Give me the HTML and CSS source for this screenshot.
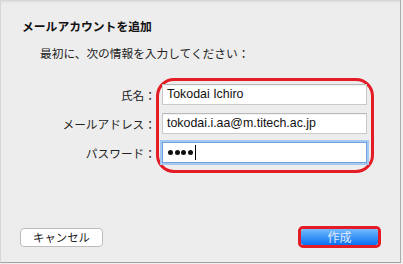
FILE: index.html
```html
<!DOCTYPE html>
<html lang="ja">
<head>
<meta charset="utf-8">
<link rel="stylesheet" href="styles.css">
</head>
<body>
<div class="window">
  <div class="title">メールアカウントを追加</div>
  <div class="intro">最初に、次の情報を入力してください：</div>
  <div class="form">
    <div class="labels">
      <div class="label">氏名：</div>
      <div class="label">メールアドレス：</div>
      <div class="label">パスワード：</div>
    </div>
    <div class="fields">
      <div class="field">Tokodai Ichiro</div>
      <div class="field">tokodai.i.aa@m.titech.ac.jp</div>
      <div class="field focused"><span class="dot"></span><span class="dot"></span><span class="dot"></span><span class="dot"></span><span class="caret"></span></div>
    </div>
  </div>
  <div class="footer">
    <div class="btn cancel">キャンセル</div>
    <div class="primary-ring"><div class="btn primary">作成</div></div>
  </div>
</div>
</body>
</html>
```
FILE: styles.css
```css
html, body {
  margin: 0;
  padding: 0;
  background: #f0f0f0;
  width: 403px;
  height: 264px;
  overflow: hidden;
}
.window {
  width: 399px;
  height: 262px;
  box-sizing: content-box;
  border-left: 1px solid #d6d6d6;
  border-right: 1px solid #a9a9a9;
  border-bottom: 1px solid #a3a3a3;
  background: linear-gradient(#d3d3d3 0px, #e6e6e6 2px, #ededed 4px, #ededed 100%);
  font-family: "Noto Sans CJK JP", "Liberation Sans", sans-serif;
  color: #1a1a1a;
  display: flex;
  flex-direction: column;
}
.title {
  margin: 18px 0 0 21px;
  font-size: 11.8px;
  line-height: 16px;
  font-weight: bold;
  color: #111;
}
.intro {
  margin: 10px 0 0 39px;
  font-size: 11.7px;
  line-height: 17px;
  color: #222;
}
.form {
  display: flex;
  margin-top: 17px;
}
.labels {
  width: 155px;
  padding-top: 6px;
  display: flex;
  flex-direction: column;
  gap: 8px;
}
.label {
  height: 21px;
  line-height: 21px;
  text-align: right;
  font-size: 11.7px;
  color: #222;
}
.fields {
  width: 205px;
  border: 3px solid #e41c26;
  border-radius: 18px;
  padding: 3px 4px 7px 3px;
  display: flex;
  flex-direction: column;
  gap: 8px;
}
.field {
  height: 21px;
  box-sizing: border-box;
  background: #fff;
  border: 1px solid #c9c9c9;
  border-top-color: #b9b9b9;
  box-shadow: inset 0 1px 1px rgba(0,0,0,0.06);
  font-family: "Liberation Sans", Arial, sans-serif;
  font-size: 12.4px;
  line-height: 19px;
  padding-left: 4px;
  color: #111;
  white-space: nowrap;
  overflow: hidden;
  display: flex;
  align-items: center;
}
.field.focused {
  border: 1px solid #6ea2e0;
  box-shadow: 0 0 0 2px #a6c8f1;
  padding-left: 5px;
}
.dot {
  width: 5px;
  height: 5px;
  border-radius: 50%;
  background: #111;
  margin-right: 1.5px;
}
.caret {
  width: 1px;
  height: 15px;
  background: #000;
  margin-left: 1px;
}
.footer {
  margin-top: 53px;
  display: flex;
  justify-content: space-between;
  align-items: center;
  padding: 0 19px 0 19px;
}
.btn {
  box-sizing: border-box;
  text-align: center;
  font-size: 11.4px;
}
.cancel {
  width: 83px;
  height: 19px;
  line-height: 17px;
  background: #fff;
  border: 1px solid #bcbcbc;
  border-radius: 4px;
  color: #1a1a1a;
  margin-top: 1px;
}
.primary-ring {
  border: 3px solid #e41c26;
  border-radius: 5px;
}
.primary {
  width: 77px;
  height: 16px;
  line-height: 16px;
  border-radius: 3px;
  background: linear-gradient(#74bbfc, #3d96f8 50%, #0a6ff4);
  color: #e2ecfb;
  font-size: 12px;
}
```
